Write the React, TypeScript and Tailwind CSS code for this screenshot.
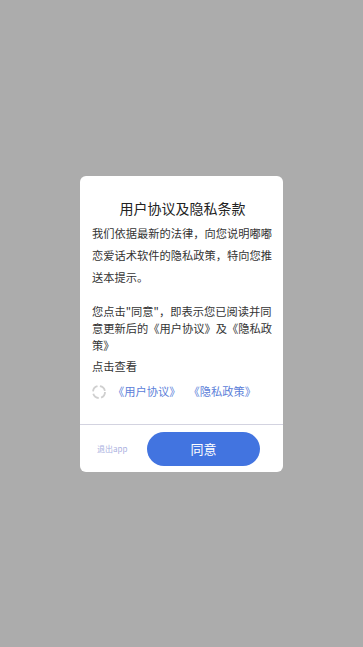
export default function App() {
  return (
    <div
      className="flex h-[647px] w-full items-center justify-center bg-[#acacac]"
      style={{ fontFamily: '"Noto Sans CJK SC", "Noto Sans", sans-serif' }}
    >
      <div className="flex w-[203px] flex-col rounded-[6px] bg-white">
        <div className="pl-[12px] pr-[10px] pt-[22px]">
          <h1 className="text-center text-[14px] leading-[20px] text-[#222]">用户协议及隐私条款</h1>
          <p className="mt-[4px] text-[11.25px] leading-[22px] text-[#333]">
            我们依据最新的法律，向您说明嘟嘟恋爱话术软件的隐私政策，特向您推送本提示。
          </p>
          <p className="mt-[15px] text-[11.25px] leading-[17px] text-[#333]">
            您点击"同意"，即表示您已阅读并同意更新后的《用户协议》及《隐私政策》
          </p>
          <p className="mt-[4px] text-[11.25px] leading-[17px] text-[#333]">点击查看</p>
          <div className="mt-[7px] flex h-[20px] items-center">
            <svg width="14" height="14" viewBox="0 0 14 14">
              <circle
                cx="7"
                cy="7"
                r="6"
                fill="none"
                stroke="#cfcfcf"
                strokeWidth="1.8"
                strokeDasharray="7 2.5"
              />
            </svg>
            <span className="ml-[7px] text-[11.25px] text-[#5b80d9]">《用户协议》</span>
            <span className="ml-[8px] text-[11.25px] text-[#5b80d9]">《隐私政策》</span>
          </div>
        </div>
        <div className="mt-[22px] h-px bg-[#d3d3e0]" />
        <div className="flex items-center justify-between pb-[6px] pl-[17px] pr-[23px] pt-[7px]">
          <span className="text-[8px] text-[#aab0e0]">退出app</span>
          <button className="h-[34px] w-[113px] rounded-full bg-[#4274e0] text-[13px] text-white">同意</button>
        </div>
      </div>
    </div>
  )
}
